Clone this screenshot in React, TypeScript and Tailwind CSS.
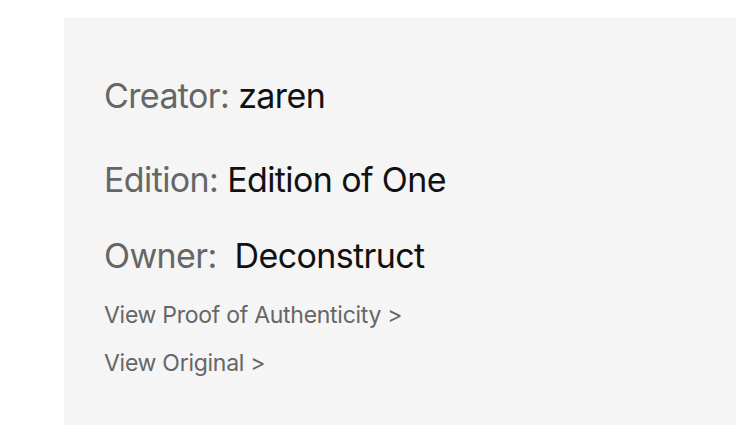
import React from 'react'

const rows = [
    { label: 'Creator:', value: 'zaren', gap: 'mt-0' },
    { label: 'Edition:', value: 'Edition of One', gap: 'mt-[44px]' },
    { label: 'Owner:', value: '\u00a0Deconstruct', gap: 'mt-[36px]' },
]

export default function App() {
    return (
        <div className="w-[736px] h-[426px] bg-white overflow-hidden font-['Inter',sans-serif]">
            <div className="ml-[64px] mt-[18px] w-[700px] h-[407px] bg-[#f5f5f5] pl-[40px] pt-[58px]">
                {rows.map((r) => (
                    <div key={r.label} className={`${r.gap} text-[34px] leading-[40px] tracking-[-0.018em] whitespace-pre`}>
                        <span className="text-[#666666]">{r.label}</span>{' '}
                        <span className="text-[#111111]">{r.value}</span>
                    </div>
                ))}
                <a className="block mt-[25px] text-[23px] leading-[28px] tracking-[-0.012em] text-[#666666]">View Proof of Authenticity &gt;</a>
                <a className="block mt-[20px] text-[23px] leading-[28px] tracking-[-0.012em] text-[#666666]">View Original &gt;</a>
            </div>
        </div>
    )
}
